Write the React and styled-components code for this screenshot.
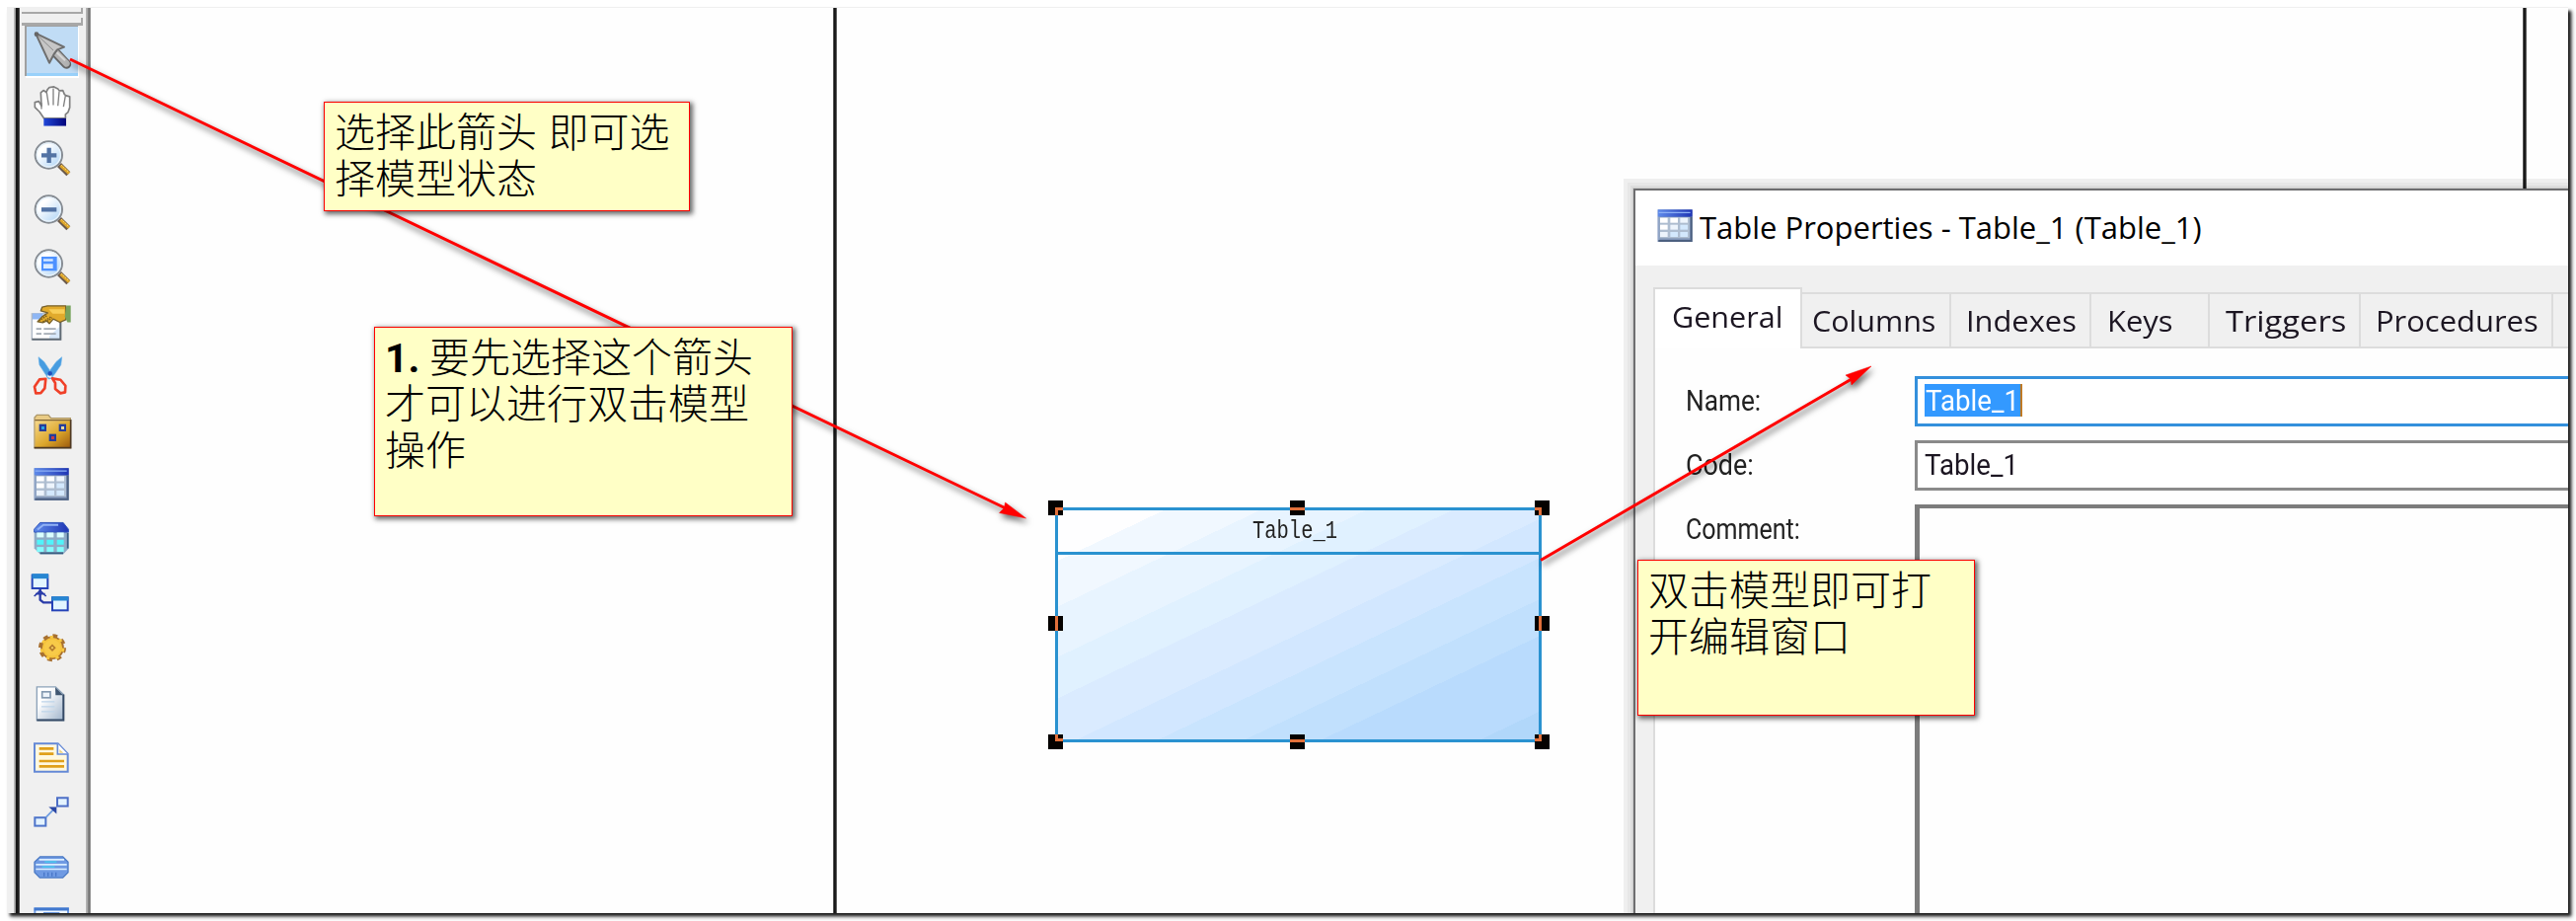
import React, { useLayoutEffect, useRef } from "react";
import styled, { createGlobalStyle, css } from "styled-components";

const GlobalStyle = createGlobalStyle`
  html, body { margin: 0; background: #fff; }
  *, *::before, *::after { box-sizing: border-box; }
`;

const Page = styled.main`
  width: 2610px;
  height: 933px;
  padding: 8px 8px 8px 7px;
  overflow: hidden;
  background: #fff;
`;

const Shot = styled.div`
  position: relative;
  display: flex;
  width: 2595px;
  height: 917px;
  box-shadow: 0 -1px 0 #efefef, 3px 3px 3px 0 #1c1c1c, 4px 4px 5px 0 rgba(0, 0, 0, 0.25);
`;

const Workspace = styled.div`
  position: relative;
  display: flex;
  flex: 1;
  overflow: hidden;
  background: #fefefe;
`;

const OuterEdge = styled.div`
  flex: none;
  width: 13px;
  background: linear-gradient(to right, #f0f0f0 7px, #c8c8c8 7px, #8a8a8a 9px, #111 9px, #222 12px, #777 13px);
`;

const Toolbar = styled.nav`
  flex: none;
  display: flex;
  flex-direction: column;
  align-items: flex-start;
  width: 67px;
  height: 950px;
  padding-left: 5px;
  background: #f0f0f0;
`;

const Grip = styled.div`
  flex: none;
  width: 62px;
  height: ${(p) => p.$h}px;
  margin: ${(p) => p.$top}px 0 0 -3px;
  border-bottom: ${(p) => p.$line}px solid #a8a8a8;
  border-right: 2px solid #a8a8a8;
`;

const Splitter = styled.div`
  flex: none;
  width: 5px;
  background: linear-gradient(to right, #b8b8b8, #a8a8a8 1.5px, #707070 3px, #787878 4px, #b8b8b8);
`;

const ToolButton = styled.div`
  flex: none;
  display: flex;
  align-items: center;
  justify-content: center;
  width: 54px;
  height: 51px;
  margin-bottom: 4.1px;
  ${(p) =>
    p.$active &&
    css`
      background: #c0dcf5;
      box-shadow: inset 2px 1px 0 #a0a0a0, inset 0 -3px 0 #99d1fa, 1px 2px 0 #fff;
    `}
`;

const IconSvg = styled.svg`
  display: block;
  flex: none;
  width: 40px;
  height: 40px;
  overflow: visible;
`;

const Canvas = styled.section`
  position: relative;
  flex: 1;
`;

const PageLine = styled.div`
  position: absolute;
  top: 0;
  left: ${(p) => p.$x}px;
  width: 4px;
  height: 917px;
  background: linear-gradient(to right, #999, #111 1px, #222 3px, #999 4px);
`;

const Entity = styled.article`
  position: absolute;
  left: ${(p) => p.$x}px;
  top: ${(p) => p.$y}px;
  width: 493px;
  height: 238px;
  border: 3px solid #2a92d0;
  background: linear-gradient(
    to bottom right,
    #fefeff 11%, #f1f8ff 11% 21%, #e8f4ff 21% 32%, #e0f1ff 32% 41%, #daebff 41% 52%,
    #d2e7ff 52% 60.5%, #c9e4fe 60.5% 69.5%, #c1e0fd 69.5% 77.5%, #b9dbfd 77.5% 94%, #b1d7fa 94%
  );
`;

const EntityTitle = styled.header`
  height: 45px;
  padding: 7px 0 0 197px;
  border-bottom: 3px solid #2a92d0;
  font: 25px/30px "Liberation Mono", monospace;
  color: #222;
`;

const Handle = styled.i`
  position: absolute;
  left: ${(p) => p.$x}px;
  top: ${(p) => p.$y}px;
  width: 15px;
  height: 15px;
  background: #050200;
  overflow: hidden;

  &::after {
    content: "";
    position: absolute;
    left: ${(p) => p.$ml}px;
    top: ${(p) => p.$mt}px;
    width: 16px;
    height: 16px;
    border: 0 solid #e2703a;
    border-width: ${(p) => p.$edges};
  }
`;

const Dialog = styled.section`
  position: absolute;
  left: ${(p) => p.$x}px;
  top: ${(p) => p.$y}px;
  width: 960px;
  height: 760px;
  border: 2px solid #6e6e70;
  background: #f0f0f0;
  box-shadow: 0 0 0 1px rgba(0, 0, 0, 0.08), 0 0 0 3px rgba(0, 0, 0, 0.04), 0 0 0 6px rgba(0, 0, 0, 0.03),
    0 0 0 10px rgba(0, 0, 0, 0.06);
`;

const TitleBar = styled.header`
  display: flex;
  align-items: flex-start;
  height: 76px;
  padding: 16px 0 0 20px;
  background: #fff;
  font: 31px/42px "Open Sans", sans-serif;
  color: #000;

  svg { margin: 0 5px 0 0; }
`;

const Tabs = styled.div`
  display: flex;
  align-items: flex-end;
  height: 84px;
  padding-left: 18px;
`;

const Tab = styled.div`
  flex: none;
  width: ${(p) => p.$w}px;
  height: ${(p) => (p.$active ? 62 : 57)}px;
  padding: ${(p) => (p.$active ? 7 : 6)}px 0 0 ${(p) => p.$pad}px;
  border: 2px solid #dcdcdc;
  border-left-width: ${(p) => (p.$first ? 2 : 0)}px;
  border-bottom-width: ${(p) => (p.$active ? 0 : 2)}px;
  background: ${(p) => (p.$active ? "#fff" : "#f0f0f0")};
  font: 30px/42px "Open Sans", sans-serif;
  color: #1c1622;
`;

const Form = styled.div`
  display: flex;
  flex-direction: column;
  height: 590px;
  margin-left: 18px;
  padding-top: 28px;
  border-left: 2px solid #dcdcdc;
  background: #fefefe;
`;

const Field = styled.div`
  display: flex;
  flex: none;
  margin-bottom: ${(p) => p.$gap}px;
`;

const Label = styled.label`
  flex: none;
  width: 232px;
  margin-left: 31px;
  padding-top: 8px;
  font: 30px/34px Roboto, sans-serif;
  color: #222;
`;

const Input = styled.div`
  flex: none;
  display: flex;
  align-items: flex-start;
  width: 700px;
  height: 51px;
  padding: 5px 0 0 7px;
  border: 3px solid ${(p) => (p.$focus ? "#3390dc" : "#8a8a8a")};
  background: #fff;
  font: 30px/34px Roboto, sans-serif;
  color: #1c1622;
`;

const Selection = styled.span`
  height: 33px;
  padding: 0 1px;
  border-right: 2px solid #c07a24;
  background: #3399ff;
  color: #fff;
`;

const TextArea = styled.div`
  width: 700px;
  height: 460px;
  border: 4px solid #7c7c7c;
  border-left-width: 5px;
  background: #fefefe;
`;

const FitBox = styled.span`
  display: inline-block;
  width: ${(p) => p.$w}px;
  white-space: nowrap;

  > span { display: inline-block; transform-origin: 0 50%; }
`;

const Arrows = styled.svg`
  position: absolute;
  left: 0;
  top: 0;
  width: 2595px;
  height: 917px;
  filter: drop-shadow(2px 4px 3px rgba(0, 0, 0, 0.6));
`;

const Note = styled.aside`
  position: absolute;
  left: ${(p) => p.$x}px;
  top: ${(p) => p.$y}px;
  width: ${(p) => p.$w}px;
  height: ${(p) => p.$h}px;
  padding: 8px 0 0 10px;
  border: 1px solid #f00;
  background: #ffffc6;
  box-shadow: 2px 2px 5px 1px rgba(0, 0, 0, 0.6);
  font: 41px/47.2px "Liberation Sans", "Noto Sans CJK SC", sans-serif;
  font-weight: 300;
  color: #000;
`;

const NoteLine = styled.div`
  display: flex;
  gap: 11px;
  height: 47.2px;
  white-space: nowrap;
`;

const NoteNumber = styled.b`
  width: 34px;
  font-family: Roboto, sans-serif;
  font-weight: 700;
`;

// Condenses a text run so that it fills exactly the given width.
function Fit({ w, children }) {
  const ref = useRef(null);
  useLayoutEffect(() => {
    const el = ref.current;
    el.style.transform = `scaleX(${w / el.offsetWidth})`;
  }, [w]);
  return (
    <FitBox $w={w}>
      <span ref={ref}>{children}</span>
    </FitBox>
  );
}

const Magnifier = ({ y, children }) => (
  <g transform={`translate(0 ${y})`}>
    <path d="M180 75 L208 103" stroke="#6b5a4c" strokeWidth="17" />
    <path d="M184 77 L210 101" stroke="#dfa62a" strokeWidth="9" />
    <path d="M187 76 L212 100" stroke="#ffe38a" strokeWidth="3" strokeDasharray="4 4" />
    <circle cx="148" cy="45" r="41" fill="url(#lens)" stroke="#858b92" strokeWidth="6" />
    <circle cx="148" cy="45" r="36" fill="none" stroke="#e6f1fa" strokeWidth="4" />
    {children}
  </g>
);

const TableGlyph = ({ x = 0, y = 0 }) => (
  <g transform={`translate(${x} ${y})`}>
    <rect x="104" y="552" width="105" height="98" fill="#8296b8" />
    <rect x="104" y="552" width="105" height="22" fill="url(#tblHead)" />
    <path d="M107 561 H203" stroke="#8db0f5" strokeWidth="4" />
    <rect x="104" y="574" width="5" height="76" fill="#91a6c8" />
    <path d="M106 647 H209 M206 574 V650" stroke="#4c6080" strokeWidth="6" />
    <rect x="110" y="575" width="91" height="64" fill="#aebdd0" />
    {[577, 598, 620].map((cy, r) =>
      [111, 142, 172].map((cx, c) => (
        <rect key={cx + "-" + cy} x={cx} y={cy} width="23" height="15" fill={r + c > 2 ? "#d3e8fd" : r + c > 1 ? "#edf4fc" : "#fff"} />
      ))
    )}
  </g>
);

const icons = [
  {
    y: 93,
    art: (
      <g>
        <path d="M172 160 L202 192" stroke="#666" strokeWidth="29" strokeLinecap="round" />
        <path d="M172 159 L202 190" stroke="#b4b4b4" strokeWidth="20" strokeLinecap="round" />
        <path d="M172 156 L198 181" stroke="#d6d6d6" strokeWidth="6" />
        <path d="M108 98 L195 140 L174 148 L165 160 L150 188 Z" fill="#c6c6c6" stroke="#6e6e6e" strokeWidth="6" strokeLinejoin="round" />
        <path d="M116 106 L162 150" stroke="#8c8c8c" strokeWidth="3" />
        <circle cx="111" cy="101" r="7" fill="#666" />
      </g>
    ),
  },
  {
    y: 258.3,
    art: (
      <g>
        <path d="M134 357 L120 337 L106 323 L106 308 L118 305 L126 319 L124 279 L132 272 L141 278 L144 270 L150 263 L164 261 L176 267 L180 273 L191 272 L196 284 L201 288 L212 291 V324 L207 338 L199 345 V357 Z" fill="#fff" stroke="#808080" strokeWidth="5" strokeLinejoin="round" />
        <path d="M142 279 L148 317 M162 266 V317 M180 275 L176 319 M199 288 L193 322 M126 310 V329" stroke="#808080" strokeWidth="4" fill="none" />
        <rect x="133" y="357" width="68" height="23" fill="url(#cuff)" />
      </g>
    ),
  },
  { y: 423.6, art: <Magnifier y={423.6}><path d="M126 46 H172 M149 23 V69" stroke="#5373a4" strokeWidth="13" /></Magnifier> },
  { y: 588.9, art: <Magnifier y={588.9}><path d="M126 46 H172" stroke="#5373a4" strokeWidth="13" /></Magnifier> },
  {
    y: 754.2,
    art: (
      <Magnifier y={754.2}>
        <rect x="126" y="24" width="47" height="43" fill="#4c91ff" />
        <rect x="132" y="31" width="29" height="7" fill="#d9ebff" />
        <rect x="132" y="46" width="29" height="14" fill="#d9ebff" />
      </Magnifier>
    ),
  },
  {
    y: 49.5,
    art: (
      <g>
        <rect x="97" y="82" width="87" height="78" fill="#fff" stroke="#aeb9c6" strokeWidth="4" />
        <path d="M99 90 H130" stroke="#8eb6f4" strokeWidth="18" />
        <path d="M150 150 L182 120 V158 H150Z" fill="#d7e8fa" />
        <path d="M97 160 H184 V100" fill="none" stroke="#606a74" strokeWidth="6" />
        <path d="M110 128 H126 M110 143 H126 M133 128 H170 M133 143 H170" stroke="#a3abb4" strokeWidth="5" />
        <path d="M128 62 L144 58 H200 V100 L182 108 L162 98 L150 112 L142 104 L130 109 L114 106 L128 91 L145 79 L124 73 Z" fill="#e1ab2c" stroke="#76602b" strokeWidth="4" strokeLinejoin="round" />
        <path d="M148 68 H196 V82 H160Z" fill="#f8cf58" />
        <path d="M118 104 L142 88 M130 107 L154 92 M143 105 L158 94" stroke="#7a5d1c" strokeWidth="4" strokeDasharray="5 3" />
        <path d="M202 57 H215 V108 H205 L197 90 Z" fill="#78a35d" />
      </g>
    ),
  },
  {
    y: 214.8,
    art: (
      <g fill="none">
        <path d="M117 214 L134 228 L155 260 L160 277 L148 281 L138 266 L120 238 Z M188 214 L171 228 L148 260 L142 275 L154 279 L166 266 L185 238 Z" fill="#469ce0" stroke="#67b0e8" strokeWidth="2" />
        <circle cx="152" cy="264" r="7" fill="#1e4fbd" />
        <path d="M139 280 L120 282 L105 304 L109 324 L124 323 L136 309 Z M159 279 L184 283 L199 301 L198 321 L184 324 L168 311 L168 293 Z" stroke="#f04028" strokeWidth="8" strokeLinejoin="round" />
      </g>
    ),
  },
  {
    y: 380.1,
    art: (
      <g>
        <path d="M105 490 V398 L112 390 H147 L155 400 H214 V490 Z" fill="#e9cb85" stroke="#ad9768" strokeWidth="4" />
        <rect x="107" y="408" width="107" height="82" fill="url(#folder)" />
        <path d="M104 490 H215 V404" fill="none" stroke="#4d3823" strokeWidth="5" />
        <path d="M106 406 H214" stroke="#816537" strokeWidth="4" />
        {[[119, 418, "#2ba5e0"], [179, 418, "#e9d799"], [149, 448, "#c63c45"]].map(([x, y, c]) => (
          <g key={x}><rect x={x} y={y} width="22" height="22" fill="#243c9b" /><rect x={x + 7} y={y + 7} width="9" height="9" fill={c} /></g>
        ))}
      </g>
    ),
  },
  { y: 545.4, art: <TableGlyph /> },
  {
    y: 710.7,
    art: (
      <g>
        <path d="M104 742 L122 717 H192 L209 742 V796 L192 814 H122 L104 796 Z" fill="#8fabc6" />
        <path d="M104 747 V738 L122 718 H192 L208 738 V747 Z" fill="url(#tblHead)" stroke="#3358bd" strokeWidth="3" />
        <path d="M114 739 L132 725 H177" stroke="#91b2f5" strokeWidth="6" fill="none" />
        {[748, 770, 792].map((cy, r) => [112, 142, 173].map((cx) => <rect key={cx + "-" + cy} x={cx} y={cy} width="21" height="15" fill={["#d9ffff", "#50f4fa", "#85fcfd"][r]} />))}
        <path d="M122 811 H192 M206 750 V796" stroke="#375c80" strokeWidth="5" />
      </g>
    ),
  },
  {
    y: 876,
    art: (
      <g fill="none">
        <rect x="98" y="878" width="47" height="40" fill="#e2f5ff" stroke="#2442b8" strokeWidth="6" />
        <path d="M97 881 H147" stroke="#2786d2" strokeWidth="15" />
        <rect x="159" y="946" width="47" height="39" fill="#e2f5ff" stroke="#2442b8" strokeWidth="6" />
        <path d="M157 949 H208" stroke="#2786d2" strokeWidth="13" />
        <path d="M122 920 V953 L132 961 H157" stroke="#293ba8" strokeWidth="7" />
        <path d="M104 942 L122 925 L140 942 M108 935 H137" stroke="#293ba8" strokeWidth="5" />
      </g>
    ),
  },
  {
    y: 81.3,
    art: (
      <g>
        <circle cx="159" cy="136" r="33" fill="#f5c23c" stroke="#a87131" strokeWidth="5" />
        <circle cx="159" cy="136" r="37" fill="none" stroke="#a87131" strokeWidth="10" strokeDasharray="14.5 14.56" />
        <circle cx="159" cy="136" r="33" fill="none" stroke="#f8c942" strokeWidth="8" strokeDasharray="10 19.06" strokeDashoffset="-2" />
        <circle cx="159" cy="136" r="25" fill="#f8ca48" />
        <path d="M159 125 L170 136 L159 147 L148 136 Z" fill="#b57b2c" />
        <path d="M159 132 L163 136 L159 140 L155 136 Z" fill="#f9d76a" />
      </g>
    ),
  },
  {
    y: 246.6,
    art: (
      <g>
        <path d="M112 255 H169 L193 278 V356 H112 Z" fill="url(#doc)" stroke="#8ba1b8" strokeWidth="4" />
        <path d="M112 356 H193 V278" fill="none" stroke="#354a66" strokeWidth="6" />
        <path d="M168 256 L192 280 H169 Z" fill="#405772" />
        <rect x="128" y="270" width="25" height="18" fill="#eef4fa" stroke="#8399b0" strokeWidth="5" />
        <path d="M126 300 H166 M126 315 H166 M126 330 H166" stroke="#bdd3e9" strokeWidth="4" />
      </g>
    ),
  },
  {
    y: 411.9,
    art: (
      <g>
        <path d="M105 428 H176 L206 459 V513 H105 Z" fill="#fff8df" stroke="#6489d6" strokeWidth="6" />
        <path d="M175 428 V460 H206" fill="#fff" stroke="#6489d6" strokeWidth="5" />
        <path d="M181 445 L193 456 H181Z" fill="#edd37e" />
        <path d="M119 443 H163 M119 459 H163 M119 481 H195 M119 497 H195" stroke="#e0a01a" strokeWidth="8" />
      </g>
    ),
  },
  {
    y: 577.2,
    art: (
      <g>
        <rect x="174" y="593" width="32" height="25" fill="#e4f3ff" stroke="#4d6ec6" strokeWidth="6" />
        <rect x="106" y="653" width="33" height="25" fill="#e4f3ff" stroke="#4d74ca" strokeWidth="6" />
        <path d="M140 652 L164 627" stroke="#6e9ce0" strokeWidth="5" />
        <path d="M148 621 H172 V642 Z" fill="#2b47a4" />
      </g>
    ),
  },
  {
    y: 742.5,
    art: (
      <g>
        <path d="M122 772 H191 L207 788 V820 L191 836 H121 L105 820 V788 Z" fill="#6f9ae3" stroke="#4e7cc5" strokeWidth="4" />
        <path d="M119 781 H195 M109 796 H203 M109 810 H203" stroke="#d9edff" strokeWidth="5" />
        <path d="M136 788 H172 M128 803 H166" stroke="#4fc4ee" strokeWidth="5" />
        <path d="M134 820 V832 M146 820 V832 M158 820 V832 M170 820 V832" stroke="#4877c8" strokeWidth="4" />
      </g>
    ),
  },
  {
    y: 907.8,
    art: (
      <g>
        <rect x="106" y="930" width="101" height="85" fill="#eef6ff" stroke="#6f9ae0" strokeWidth="6" />
        <path d="M104 932 H209" stroke="#4178ce" strokeWidth="9" />
        <path d="M135 955 V944 H178 V955" fill="none" stroke="#6b98db" strokeWidth="6" />
      </g>
    ),
  },
];

const tabs = [
  { name: "General", w: 151, pad: 17, text: 112, active: true, first: true },
  { name: "Columns", w: 151, pad: 10, text: 125 },
  { name: "Indexes", w: 142, pad: 15, text: 112 },
  { name: "Keys", w: 120, pad: 16, text: 67 },
  { name: "Triggers", w: 153, pad: 16, text: 122 },
  { name: "Procedures", w: 195, pad: 15, text: 165 },
  { name: "", w: 160, pad: 0, text: 0 },
];

const handles = [
  { x: 970, y: 499, ml: 7, mt: 7, e: "3px 0 0 3px" },
  { x: 1215, y: 499, ml: 0, mt: 7, e: "3px 0 0 0" },
  { x: 1462.500, y: 499, ml: -9, mt: 7, e: "3px 3px 0 0" },
  { x: 970, y: 616, ml: 7, mt: 0, e: "0 0 0 3px" },
  { x: 1462.500, y: 616, ml: 4, mt: 0, e: "0 0 0 3px" },
  { x: 970, y: 736, ml: 7, mt: -9, e: "0 0 3px 3px" },
  { x: 1215, y: 736, ml: 0, mt: 5, e: "3px 0 0 0" },
  { x: 1462.500, y: 736, ml: -9, mt: -9, e: "0 3px 3px 0" },
];

const Gradients = () => (
  <defs>
    <linearGradient id="lens" x1="0" y1="0" x2="1" y2="1"><stop offset="0.3" stopColor="#fff" /><stop offset="1" stopColor="#a5cff5" /></linearGradient>
    <linearGradient id="cuff"><stop offset="0" stopColor="#2148d8" /><stop offset="1" stopColor="#04047c" /></linearGradient>
    <linearGradient id="tblHead"><stop offset="0" stopColor="#5f8bea" /><stop offset="1" stopColor="#1f35b4" /></linearGradient>
    <linearGradient id="folder" x1="0" y1="0" x2="1" y2="1"><stop offset="0" stopColor="#f7d98a" /><stop offset="0.55" stopColor="#dca72c" /><stop offset="1" stopColor="#9c5a0c" /></linearGradient>
    <linearGradient id="doc" x1="0" y1="0" x2="1" y2="1"><stop offset="0.3" stopColor="#fff" /><stop offset="1" stopColor="#9fb4cc" /></linearGradient>
  </defs>
);

export default function App() {
  return (
    <Page>
      <GlobalStyle />
      <Shot>
        <Workspace>
          <OuterEdge />
          <Toolbar>
            <Grip $h={6} $top={0} $line={2} />
            <Grip $h={8} $top={4} $line={3} />
            {icons.map((icon, i) => (
              <ToolButton key={i} $active={i === 0}>
                <IconSvg viewBox={`96 ${icon.y} 120 120`}>
                  {i === 0 && <Gradients />}
                  {icon.art}
                </IconSvg>
              </ToolButton>
            ))}
          </Toolbar>
          <Splitter />
          <Canvas>
            <PageLine $x={752} />
            <PageLine $x={2464} />
            <Entity $x={977} $y={506}>
              <EntityTitle><Fit w={86}>Table_1</Fit></EntityTitle>
            </Entity>
            {handles.map((h) => (
              <Handle key={`${h.x}-${h.y}`} $x={h.x} $y={h.y} $ml={h.ml} $mt={h.mt} $edges={h.e} />
            ))}
            <Dialog $x={1563} $y={183}>
              <TitleBar>
                <IconSvg viewBox="96 542 120 120"><TableGlyph /></IconSvg>
                <Fit w={509}>Table Properties - Table_1 (Table_1)</Fit>
              </TitleBar>
              <Tabs>
                {tabs.map((t) => (
                  <Tab key={t.name} $w={t.w} $pad={t.pad} $active={t.active} $first={t.first}>
                    {t.name && <Fit w={t.text}>{t.name}</Fit>}
                  </Tab>
                ))}
              </Tabs>
              <Form>
                <Field $gap={14}>
                  <Label><Fit w={76}>Name:</Fit></Label>
                  <Input $focus><Selection><Fit w={95}>Table_1</Fit></Selection></Input>
                </Field>
                <Field $gap={14}>
                  <Label><Fit w={69}>Code:</Fit></Label>
                  <Input><Fit w={95}>Table_1</Fit></Input>
                </Field>
                <Field $gap={0}>
                  <Label><Fit w={116}>Comment:</Fit></Label>
                  <TextArea />
                </Field>
              </Form>
            </Dialog>
          </Canvas>
          <Arrows viewBox="7 8 2595 917">
            <g stroke="#f00" strokeWidth="3" fill="#f00">
              <path d="M71 60 L1018 514.5 M1561 567.5 L1876 384" />
              <path d="M1039.500 525 L1018.500 509 L1017.500 514.500 L1012.500 519.500 Z M1896 371 L1870 380 L1875 384 L1876 390 Z" strokeWidth="0.500" />
            </g>
          </Arrows>
          <Note $x={321} $y={95} $w={371} $h={111}>
            <NoteLine>选择此箭头 即可选</NoteLine>
            <NoteLine>择模型状态</NoteLine>
          </Note>
          <Note $x={372} $y={323} $w={424} $h={192}>
            <NoteLine><NoteNumber>1.</NoteNumber><span>要先选择这个箭头</span></NoteLine>
            <NoteLine>才可以进行双击模型</NoteLine>
            <NoteLine>操作</NoteLine>
          </Note>
          <Note $x={1652} $y={559} $w={342} $h={158}>
            <NoteLine>双击模型即可打</NoteLine>
            <NoteLine>开编辑窗口</NoteLine>
          </Note>
        </Workspace>
      </Shot>
    </Page>
  );
}
